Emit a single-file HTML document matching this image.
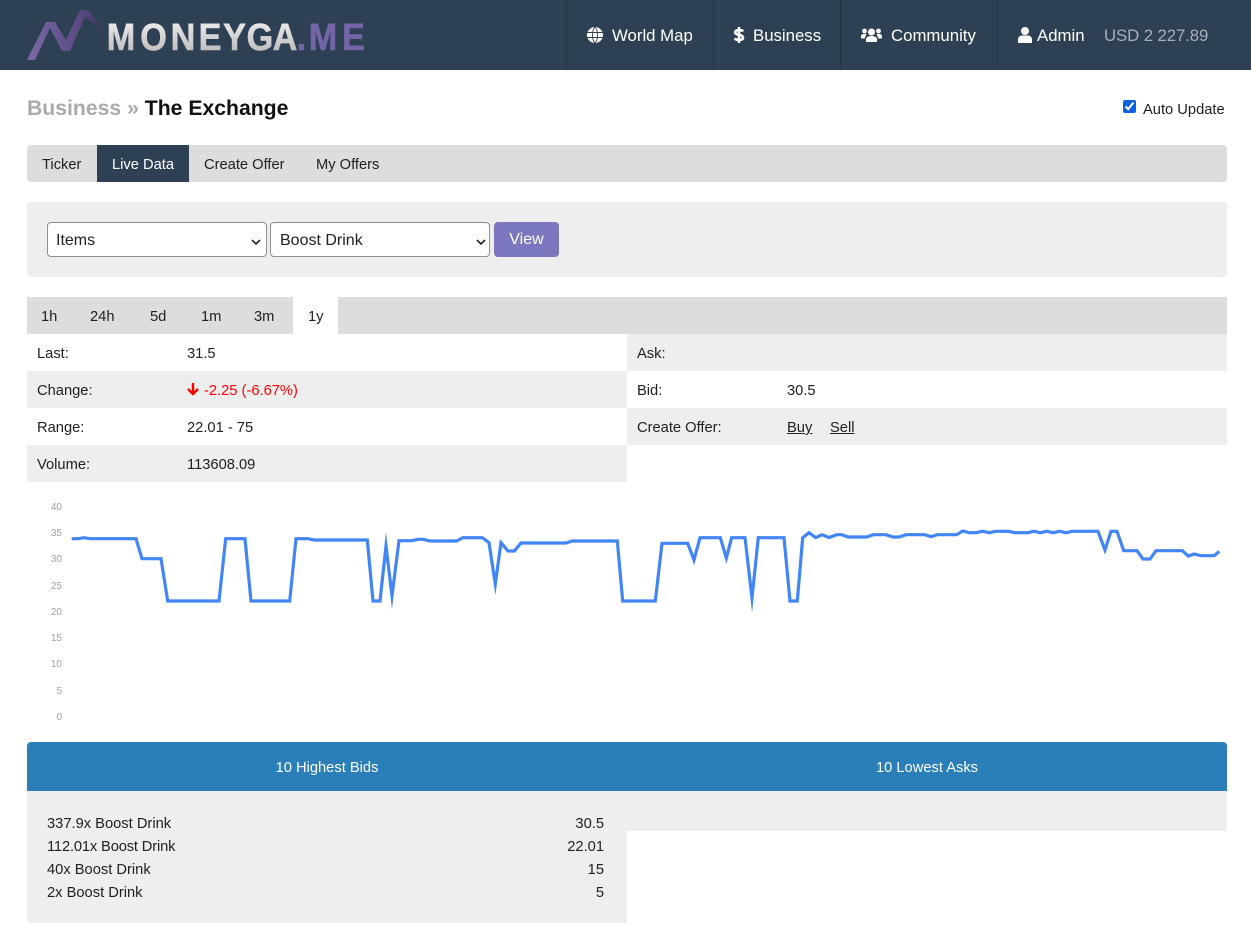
<!DOCTYPE html>
<html><head><meta charset="utf-8"><title>Business » The Exchange</title>
<style>
html,body{margin:0;padding:0;background:#fff}
body{position:relative;width:1251px;height:926px;overflow:hidden;font-family:"Liberation Sans",sans-serif;font-size:14.7px;color:#212121}
.a{position:absolute}
.t{position:absolute;white-space:nowrap;line-height:20px;margin-top:1px}
.g{background:#eee}
.n{font-size:16.8px;color:#fff;top:25px}
.d{position:absolute;top:0;width:1px;height:70px;background:#253545}
select{position:absolute;height:35px;background:#fff;border:1px solid #8f8f8f;border-radius:4px;font:16px "Liberation Sans",sans-serif;color:#212121;padding:1px 20px 0 8px;margin:0;box-sizing:border-box;appearance:none;-webkit-appearance:none}
</style></head><body>
<div class="a" style="left:0;top:0;width:1251px;height:70px;background:#2e4053"></div>
<svg class="a" style="left:0;top:0" width="400" height="70">
<defs><linearGradient id="s" x1="0" y1="0" x2="0" y2="1"><stop offset="0" stop-color="#f4f4f4"/><stop offset="1" stop-color="#b4b4b4"/></linearGradient>
<linearGradient id="i" x1="0" y1="0" x2="1" y2="0"><stop offset="0" stop-color="#7a6aa8"/><stop offset=".75" stop-color="#56477f"/><stop offset="1" stop-color="#3c3a5f"/></linearGradient></defs>
<path d="M27 60L46 22H55L66 40L80 10H88L103 29L85 17L70 51H62L50 28L35 60Z" fill="url(#i)"/>
<text transform="translate(0 50) scale(.9 1)" x="118.600 155.800 189.600 220.700 247.900 274.100 302.900" font-family="Liberation Sans" font-weight="700" font-size="38" fill="url(#s)" stroke="url(#s)" stroke-width=".6">MONEYGA</text>
<text transform="translate(0 50) scale(.9 1)" x="329.700 343.100 380.100" font-family="Liberation Sans" font-weight="700" font-size="38" fill="#7464a8" stroke="#7464a8" stroke-width=".6">.ME</text>
</svg>
<div class="d" style="left:566px"></div><div class="d" style="left:713px"></div><div class="d" style="left:840px"></div><div class="d" style="left:997px"></div>
<svg class="a" style="left:587px;top:27px" width="16" height="16" viewBox="0 0 16 16" fill="none"><circle cx="8" cy="8" r="8" fill="#fff"/><path d="M0 5.500H16M0 10.500H16M8 0C4.500 4 4.500 12 8 16C11.500 12 11.500 4 8 0Z" stroke="#2e4053" stroke-width=".9"/></svg>
<div class="t n" style="left:612px">World Map</div>
<svg class="a" style="left:733px;top:26px" width="12" height="18" viewBox="0 0 12 18"><path d="M10 5.500C9.500 4.500 8 4 6 4C3.500 4 2.200 5 2.200 6.300C2.200 9.500 10 8 10 11.700C10 13 8.500 14 6 14C4 14 2.500 13.500 1.700 12.300M6 1V17" fill="none" stroke="#fff" stroke-width="2.600"/></svg>
<div class="t n" style="left:753px">Business</div>
<svg class="a" style="left:861px;top:27px" width="21" height="16" viewBox="0 0 21 16" fill="#fff"><circle cx="10.500" cy="5" r="3.500"/><circle cx="3.500" cy="4" r="2.400"/><circle cx="17.500" cy="4" r="2.400"/><path d="M5 15V12.500C5 10 7.500 9 10.500 9C13.500 9 16 10 16 12.500V15ZM0 11.500V9C0 7.500 1.500 7 3.500 7C4.500 7 5.200 7.300 5.600 7.800C4.600 8.700 4 10 3.800 11.500ZM21 11.500V9C21 7.500 19.500 7 17.500 7C16.500 7 15.800 7.300 15.400 7.800C16.400 8.700 17 10 17.200 11.500Z"/></svg>
<div class="t n" style="left:891px">Community</div>
<svg class="a" style="left:1018px;top:27px" width="14" height="16" viewBox="0 0 14 16" fill="#fff"><circle cx="7" cy="4" r="4"/><path d="M0 16V12.500C0 10 2 8.500 4 8.500H10C12 8.500 14 10 14 12.500V16Z"/></svg>
<div class="t n" style="left:1037px">Admin</div>
<div class="t n" style="left:1104px;color:#a7afb7;letter-spacing:-.1px">USD 2 227.89</div>

<div class="t" style="left:27px;top:95px;font-size:21.2px;line-height:26px;font-weight:700;color:#aaa">Business » <span style="color:#111">The Exchange</span></div>
<input class="a" type="checkbox" checked style="left:1123px;top:100px;width:13px;height:13px;margin:0;accent-color:#0b62e0">
<div class="t" style="left:1143px;top:99px">Auto Update</div>

<div class="a" style="left:27px;top:145px;width:1200px;height:37px;background:#ddd;border-radius:4px"></div>
<div class="a" style="left:97px;top:145px;width:92px;height:37px;background:#2e4053"></div>
<div class="t" style="left:42px;top:154px">Ticker</div>
<div class="t" style="left:112px;top:154px;color:#fff">Live Data</div>
<div class="t" style="left:204px;top:154px">Create Offer</div>
<div class="t" style="left:316px;top:154px">My Offers</div>

<div class="a g" style="left:27px;top:202px;width:1200px;height:75px;border-radius:4px"></div>
<select style="left:47px;top:222px;width:220px"><option>Items</option></select>
<select style="left:270px;top:222px;width:220px;padding-left:9px"><option>Boost Drink</option></select>
<svg class="a" style="left:250px;top:236px" width="240" height="12" viewBox="0 0 240 12" fill="none" stroke="#222" stroke-width="1.600"><path d="M2 4L6 8L10 4M227 4L231 8L235 4"/></svg>
<div class="a" style="left:494px;top:222px;width:65px;height:35px;background:#7b78c0;border-radius:4px"></div>
<div class="t" style="left:494px;top:229px;width:65px;text-align:center;color:#fff;font-size:16px">View</div>

<div class="a" style="left:27px;top:297px;width:1200px;height:37px;background:#ddd"></div>
<div class="a" style="left:293px;top:297px;width:45px;height:37px;background:#fff"></div>
<div class="t" style="left:41px;top:306px">1h</div>
<div class="t" style="left:90px;top:306px">24h</div>
<div class="t" style="left:150px;top:306px">5d</div>
<div class="t" style="left:201px;top:306px">1m</div>
<div class="t" style="left:254px;top:306px">3m</div>
<div class="t" style="left:308px;top:306px">1y</div>

<div class="a g" style="left:27px;top:371px;width:600px;height:37px"></div>
<div class="a g" style="left:27px;top:445px;width:600px;height:37px"></div>
<div class="a g" style="left:627px;top:334px;width:600px;height:37px"></div>
<div class="a g" style="left:627px;top:408px;width:600px;height:37px"></div>
<div class="t" style="left:37px;top:343px">Last:</div><div class="t" style="left:187px;top:343px">31.5</div>
<div class="t" style="left:37px;top:380px">Change:</div>
<svg class="a" style="left:187px;top:382px" width="12" height="14" viewBox="0 0 12 14"><path d="M6 1V12M1 7L6 12L11 7" fill="none" stroke="#f00" stroke-width="2.400"/></svg>
<div class="t" style="left:204px;top:380px;color:#f00">-2.25 (-6.67%)</div>
<div class="t" style="left:37px;top:417px">Range:</div><div class="t" style="left:187px;top:417px">22.01 - 75</div>
<div class="t" style="left:37px;top:454px">Volume:</div><div class="t" style="left:187px;top:454px">113608.09</div>
<div class="t" style="left:637px;top:343px">Ask:</div>
<div class="t" style="left:637px;top:380px">Bid:</div><div class="t" style="left:787px;top:380px">30.5</div>
<div class="t" style="left:637px;top:417px">Create Offer:</div>
<div class="t" style="left:787px;top:417px;text-decoration:underline">Buy</div>
<div class="t" style="left:830px;top:417px;text-decoration:underline">Sell</div>

<svg class="a" style="left:0;top:490px" width="1251" height="245" viewBox="0 490 1251 245">
<g font-family="Liberation Sans" font-size="10" fill="#a0a0a0" text-anchor="end">
<text x="62" y="510">40</text><text x="62" y="536">35</text><text x="62" y="562">30</text><text x="62" y="589">25</text><text x="62" y="615">20</text><text x="62" y="641">15</text><text x="62" y="667">10</text><text x="62" y="694">5</text><text x="62" y="720">0</text>
</g>
<polyline fill="none" stroke="#4285f4" stroke-width="3.200" stroke-linejoin="miter" stroke-miterlimit="20" points="71.7,538.7 78.3,538.7 84,537.7 90,538.7 136,538.7 142,558.7 161,558.7 167.7,601 219,601 225.7,538.700 245,538.7 251,601 289.700,601 296,538.700 308.300,538.700 314,540 367.300,540 373,601 380,601 386,546 392,596 399,540.700 411.700,540.700 418.300,539.300 423.300,539.300 430,541 456.700,541 462.700,537.700 482.300,537.700 489,542.700 495.300,584 501,542.700 508,551 514.300,551 521,543 566,543 572,541 617.300,541 622.700,601 655.300,601 662,543.300 687.700,543.300 694,560 700,537.700 720.300,537.700 726.300,558 731.700,537.700 745,537.700 752,598 758.300,537.700 784,537.700 790,601 797.300,601 802.700,537.700 809,532.700 815.700,537.700 822,534.700 829,537.500 836.700,534.700 841.700,534.700 848.300,537 866.700,537 873.300,534.700 886,534.700 892.700,537 899.300,537 906,534.700 925,534.700 931,536.700 937.300,534.700 956.700,534.700 962.700,531 969.300,532.700 976,532.700 982.700,531.300 989.300,532.700 995.700,531.300 1008.300,531.300 1015,532.700 1027.700,532.700 1034,531.300 1040.300,532.700 1046.700,531.300 1053,532.700 1059.700,531.300 1066,532.700 1072.300,531.300 1098,531.300 1105,550 1111,531.300 1117,531.300 1123.700,550.700 1137,550.700 1143,559 1150,559 1156,550.700 1182.300,550.700 1188.300,556 1194,554 1201,555.700 1214.300,555.700 1219.300,551.300"/>
</svg>

<div class="a" style="left:27px;top:742px;width:1200px;height:49px;background:#2a7fb8;border-radius:4px 4px 0 0"></div>
<div class="t" style="left:27px;top:757px;width:600px;text-align:center;color:#fff">10 Highest Bids</div>
<div class="t" style="left:627px;top:757px;width:600px;text-align:center;color:#fff">10 Lowest Asks</div>
<div class="a g" style="left:27px;top:791px;width:600px;height:132px;border-radius:0 0 0 4px"></div>
<div class="a g" style="left:627px;top:791px;width:600px;height:40px"></div>
<div class="t" style="left:47px;top:813px">337.9x Boost Drink</div><div class="t" style="right:647px;top:813px">30.5</div>
<div class="t" style="left:47px;top:836px;letter-spacing:-.15px">112.01x Boost Drink</div><div class="t" style="right:647px;top:836px">22.01</div>
<div class="t" style="left:47px;top:859px">40x Boost Drink</div><div class="t" style="right:647px;top:859px">15</div>
<div class="t" style="left:47px;top:882px">2x Boost Drink</div><div class="t" style="right:647px;top:882px">5</div>
</body></html>
